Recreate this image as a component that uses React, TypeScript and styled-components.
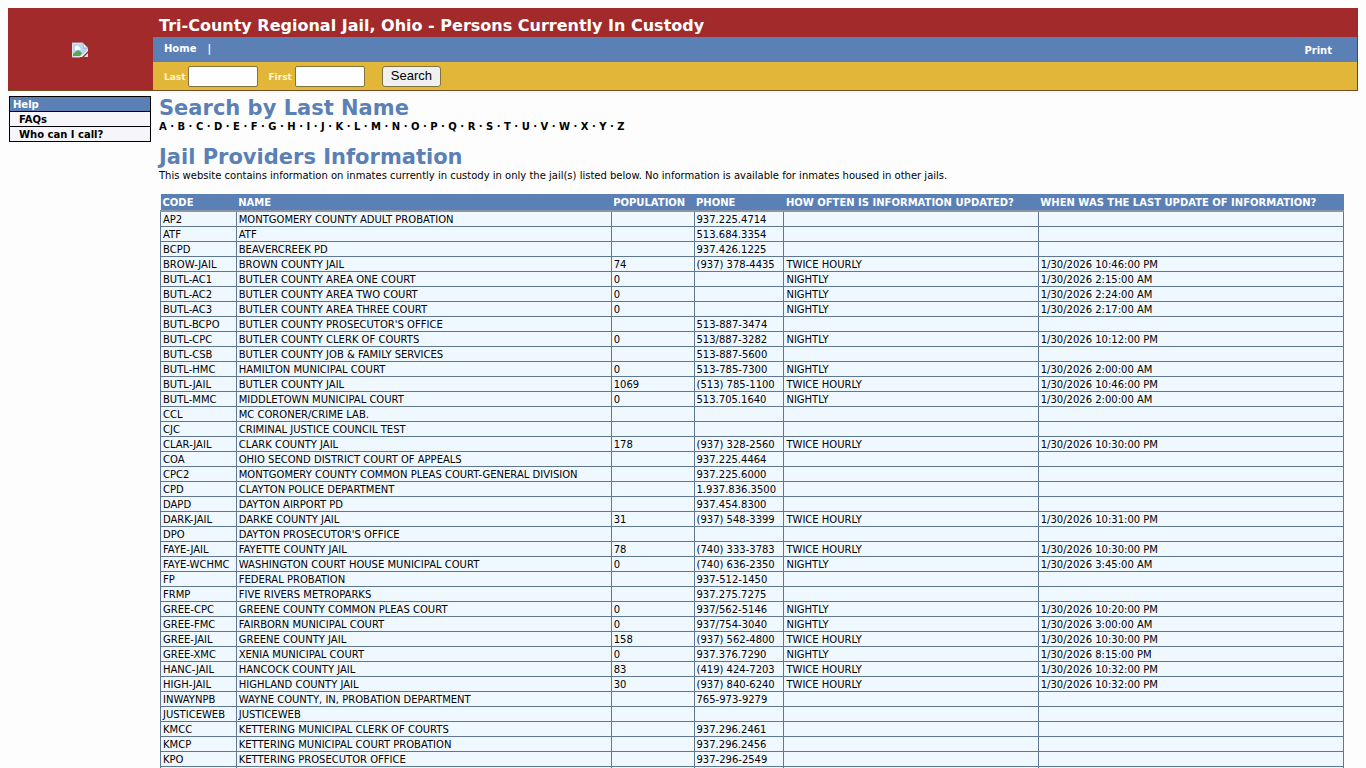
import React from "react";
import styled, { createGlobalStyle } from "styled-components";

const GlobalStyle = createGlobalStyle`
  * { box-sizing: border-box; }
  body {
    margin: 8px;
    background: #fdfdfd;
    color: #000;
    font-family: Verdana, "DejaVu Sans", sans-serif;
    font-size: 10px;
    line-height: 12px;
  }
  a { color: inherit; text-decoration: none; }
`;

const colors = {
  red: "#a32a2b",
  blue: "#5a80b5",
  gold: "#e2b739",
  heading: "#5a80b5",
  cell: "#f0f8ff",
  rule: "#5f7793",
};

const Masthead = styled.header`
  display: grid;
  grid-template-columns: 145px 1fr;
  background: ${colors.red};
  border-right: 1px solid #7a3a20;
  border-bottom: 1px solid #7a4a20;
`;

const LogoCell = styled.div`
  display: flex;
  align-items: center;
  justify-content: center;
  padding: 2px 2px 0 0;
`;

const Bars = styled.div`
  display: flex;
  flex-direction: column;
`;

const TitleBar = styled.h1`
  margin: 0;
  height: 29px;
  padding: 6px 6px 0;
  color: #fff;
  font-size: 16px;
  line-height: 23px;
  white-space: nowrap;
`;

const NavBar = styled.nav`
  display: flex;
  align-items: center;
  gap: 11px;
  height: 25px;
  padding: 0 25px 2px 11px;
  background: ${colors.blue};
  color: #fff;
  font-weight: bold;
`;

const PrintLink = styled.a`
  margin-left: auto;
  padding-top: 4px;
`;

const SearchBar = styled.form`
  display: flex;
  align-items: center;
  height: 28px;
  padding-left: 11px;
  background: ${colors.gold};
`;

const FieldLabel = styled.label`
  display: flex;
  align-items: center;
  gap: 3px;
  margin-right: 10px;
  color: #fff6cf;
  font-size: 9px;
  font-weight: bold;
`;

const LabelText = styled.span`
  padding-top: 2px;
`;

const Field = styled.input`
  width: 70px;
  height: 21px;
  border: 1px solid #80733f;
  border-radius: 2px;
  background: #fff;
`;

const SearchButton = styled.button`
  height: 21px;
  margin-left: 7px;
  padding: 0 8px;
  border: 1px solid #80733f;
  border-radius: 3px;
  background: #f0f0f0;
  color: #000;
  font: 13px/18px "Liberation Sans", Arial, sans-serif;
`;

const Page = styled.div`
  display: grid;
  grid-template-columns: 142px 1fr;
  gap: 8px;
  padding: 5px 14px 0 1px;
`;

const HelpBox = styled.nav`
  align-self: start;
  border: 1px solid #000;
  font-size: 10px;
  font-weight: bold;
  line-height: 13px;
`;

const HelpTitle = styled.div`
  padding: 1px 3px 0;
  background: ${colors.blue};
  color: #fff;
`;

const HelpLink = styled.a`
  display: block;
  padding: 1px 9px 0;
  border-top: 1px solid #000;
  background: #f5f5fa;
`;

const Main = styled.main`
  min-width: 0;
`;

const Heading = styled.h2`
  margin: 0;
  color: ${colors.heading};
  font-size: 21px;
  line-height: 25px;
`;

const Letters = styled.p`
  margin: 0 0 12px;
  font-weight: bold;
`;

const Intro = styled.p`
  margin: 0 0 12px;
`;

const Table = styled.table`
  width: calc(100% - 1px);
  margin-left: 1px;
  table-layout: fixed;
  border-collapse: collapse;
  background: ${colors.cell};
  white-space: nowrap;
`;

const Col = styled.col<{ $share: number }>`
  width: ${(p) => p.$share}%;
`;

const HeadCell = styled.th`
  height: 17px;
  padding: 2px 2px 1px;
  background: ${colors.blue};
  border-bottom: 2px solid #8d95a3;
  color: #fff;
  text-align: left;
`;

const Cell = styled.td`
  height: 15px;
  padding: 2px 1px 0 2px;
  border: 1px solid ${colors.rule};
`;

const columns: [string, number][] = [
  ["CODE", 6.4],
  ["NAME", 31.7],
  ["POPULATION", 7],
  ["PHONE", 7.6],
  ["HOW OFTEN IS INFORMATION UPDATED?", 21.5],
  ["WHEN WAS THE LAST UPDATE OF INFORMATION?", 25.8],
];

const N = "NIGHTLY";
const T = "TWICE HOURLY";

const rows: string[][] = [
  ["AP2", "MONTGOMERY COUNTY ADULT PROBATION", "", "937.225.4714", "", ""],
  ["ATF", "ATF", "", "513.684.3354", "", ""],
  ["BCPD", "BEAVERCREEK PD", "", "937.426.1225", "", ""],
  ["BROW-JAIL", "BROWN COUNTY JAIL", "74", "(937) 378-4435", T, "1/30/2026 10:46:00 PM"],
  ["BUTL-AC1", "BUTLER COUNTY AREA ONE COURT", "0", "", N, "1/30/2026 2:15:00 AM"],
  ["BUTL-AC2", "BUTLER COUNTY AREA TWO COURT", "0", "", N, "1/30/2026 2:24:00 AM"],
  ["BUTL-AC3", "BUTLER COUNTY AREA THREE COURT", "0", "", N, "1/30/2026 2:17:00 AM"],
  ["BUTL-BCPO", "BUTLER COUNTY PROSECUTOR'S OFFICE", "", "513-887-3474", "", ""],
  ["BUTL-CPC", "BUTLER COUNTY CLERK OF COURTS", "0", "513/887-3282", N, "1/30/2026 10:12:00 PM"],
  ["BUTL-CSB", "BUTLER COUNTY JOB & FAMILY SERVICES", "", "513-887-5600", "", ""],
  ["BUTL-HMC", "HAMILTON MUNICIPAL COURT", "0", "513-785-7300", N, "1/30/2026 2:00:00 AM"],
  ["BUTL-JAIL", "BUTLER COUNTY JAIL", "1069", "(513) 785-1100", T, "1/30/2026 10:46:00 PM"],
  ["BUTL-MMC", "MIDDLETOWN MUNICIPAL COURT", "0", "513.705.1640", N, "1/30/2026 2:00:00 AM"],
  ["CCL", "MC CORONER/CRIME LAB.", "", "", "", ""],
  ["CJC", "CRIMINAL JUSTICE COUNCIL TEST", "", "", "", ""],
  ["CLAR-JAIL", "CLARK COUNTY JAIL", "178", "(937) 328-2560", T, "1/30/2026 10:30:00 PM"],
  ["COA", "OHIO SECOND DISTRICT COURT OF APPEALS", "", "937.225.4464", "", ""],
  ["CPC2", "MONTGOMERY COUNTY COMMON PLEAS COURT-GENERAL DIVISION", "", "937.225.6000", "", ""],
  ["CPD", "CLAYTON POLICE DEPARTMENT", "", "1.937.836.3500", "", ""],
  ["DAPD", "DAYTON AIRPORT PD", "", "937.454.8300", "", ""],
  ["DARK-JAIL", "DARKE COUNTY JAIL", "31", "(937) 548-3399", T, "1/30/2026 10:31:00 PM"],
  ["DPO", "DAYTON PROSECUTOR'S OFFICE", "", "", "", ""],
  ["FAYE-JAIL", "FAYETTE COUNTY JAIL", "78", "(740) 333-3783", T, "1/30/2026 10:30:00 PM"],
  ["FAYE-WCHMC", "WASHINGTON COURT HOUSE MUNICIPAL COURT", "0", "(740) 636-2350", N, "1/30/2026 3:45:00 AM"],
  ["FP", "FEDERAL PROBATION", "", "937-512-1450", "", ""],
  ["FRMP", "FIVE RIVERS METROPARKS", "", "937.275.7275", "", ""],
  ["GREE-CPC", "GREENE COUNTY COMMON PLEAS COURT", "0", "937/562-5146", N, "1/30/2026 10:20:00 PM"],
  ["GREE-FMC", "FAIRBORN MUNICIPAL COURT", "0", "937/754-3040", N, "1/30/2026 3:00:00 AM"],
  ["GREE-JAIL", "GREENE COUNTY JAIL", "158", "(937) 562-4800", T, "1/30/2026 10:30:00 PM"],
  ["GREE-XMC", "XENIA MUNICIPAL COURT", "0", "937.376.7290", N, "1/30/2026 8:15:00 PM"],
  ["HANC-JAIL", "HANCOCK COUNTY JAIL", "83", "(419) 424-7203", T, "1/30/2026 10:32:00 PM"],
  ["HIGH-JAIL", "HIGHLAND COUNTY JAIL", "30", "(937) 840-6240", T, "1/30/2026 10:32:00 PM"],
  ["INWAYNPB", "WAYNE COUNTY, IN, PROBATION DEPARTMENT", "", "765-973-9279", "", ""],
  ["JUSTICEWEB", "JUSTICEWEB", "", "", "", ""],
  ["KMCC", "KETTERING MUNICIPAL CLERK OF COURTS", "", "937.296.2461", "", ""],
  ["KMCP", "KETTERING MUNICIPAL COURT PROBATION", "", "937.296.2456", "", ""],
  ["KPO", "KETTERING PROSECUTOR OFFICE", "", "937-296-2549", "", ""],
  ["", "", "", "", "", ""],
];

const alphabet = "ABCDEFGHIJKLMNOPQRSTUVWXYZ".split("");

function MissingImage() {
  return (
    <svg width="16" height="16" viewBox="0 0 16 16" aria-hidden="true">
      <path d="M0 1h11l5 5v3l-6 6H0z" fill="#fff" />
      <path d="M1 2h9v4h5v3l-6 5H1z" fill="#b9d3f6" />
      <path d="M3 6a2 2 0 0 1 4-1 2 2 0 0 1 1 3H3z" fill="#fff" />
      <path d="M1 14v-2l5-4 4 3-2 3z" fill="#58a84a" />
      <path d="M0 1h11l5 5v3M0 1v14h8" fill="none" stroke="#c3c7d0" />
      <path d="M11 1v5h5z" fill="#eef1f7" stroke="#9aa0ad" />
      <path d="M16 11v4h-4z" fill="#dfe3ea" />
    </svg>
  );
}

export default function App() {
  return (
    <>
      <GlobalStyle />
      <Masthead>
        <LogoCell>
          <MissingImage />
        </LogoCell>
        <Bars>
          <TitleBar>Tri-County Regional Jail, Ohio - Persons Currently In Custody</TitleBar>
          <NavBar>
            <a href="#home">Home</a>
            <span>|</span>
            <PrintLink href="#print">Print</PrintLink>
          </NavBar>
          <SearchBar onSubmit={(e) => e.preventDefault()}>
            <FieldLabel>
              <LabelText>Last</LabelText>
              <Field name="last" />
            </FieldLabel>
            <FieldLabel>
              <LabelText>First</LabelText>
              <Field name="first" />
            </FieldLabel>
            <SearchButton type="submit">Search</SearchButton>
          </SearchBar>
        </Bars>
      </Masthead>
      <Page>
        <HelpBox>
          <HelpTitle>Help</HelpTitle>
          <HelpLink href="#faqs">FAQs</HelpLink>
          <HelpLink href="#contacts">Who can I call?</HelpLink>
        </HelpBox>
        <Main>
          <Heading>Search by Last Name</Heading>
          <Letters>
            {alphabet.map((letter, i) => (
              <React.Fragment key={letter}>
                {i > 0 && " · "}
                <a href={`#${letter}`}>{letter}</a>
              </React.Fragment>
            ))}
          </Letters>
          <Heading>Jail Providers Information</Heading>
          <Intro>
            This website contains information on inmates currently in custody in only the jail(s)
            listed below. No information is available for inmates housed in other jails.
          </Intro>
          <Table>
            <colgroup>
              {columns.map(([name, share]) => (
                <Col key={name} $share={share} />
              ))}
            </colgroup>
            <thead>
              <tr>
                {columns.map(([name]) => (
                  <HeadCell key={name} scope="col">{name}</HeadCell>
                ))}
              </tr>
            </thead>
            <tbody>
              {rows.map((row, r) => (
                <tr key={r}>
                  {row.map((value, c) => (
                    <Cell key={c}>{value}</Cell>
                  ))}
                </tr>
              ))}
            </tbody>
          </Table>
        </Main>
      </Page>
    </>
  );
}
